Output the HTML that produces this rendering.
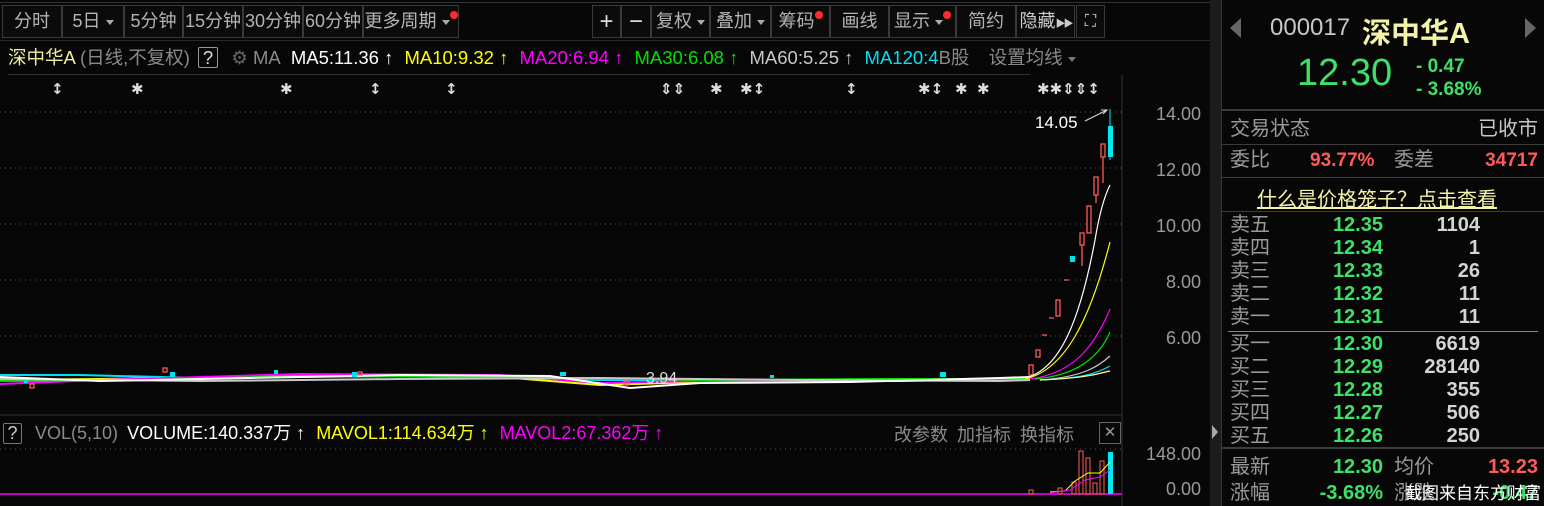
<!DOCTYPE html>
<html><head><meta charset="utf-8"><style>
*{margin:0;padding:0;box-sizing:border-box}
body{width:1544px;height:506px;background:#070707;overflow:hidden;position:relative;font-family:"Liberation Sans","Noto Sans CJK SC",sans-serif;color:#a8a8a8}
.a{position:absolute;white-space:nowrap}
.btn{position:absolute;top:5px;height:33px;border:1px solid #3a3a3a;background:#0b0b0b;color:#b4b4b4;font-size:18px;line-height:31px;text-align:center;white-space:nowrap}
.dot{display:inline-block;width:8px;height:8px;border-radius:4px;background:#ff2a2a;vertical-align:top;margin-top:5px}
.tri{display:inline-block;width:0;height:0;border-left:4px solid transparent;border-right:4px solid transparent;border-top:5px solid #aaa;vertical-align:middle;margin-left:5px}
.lb{position:absolute;left:1230px;font-size:20px;line-height:23px;color:#9a9a9a}
.pg{position:absolute;right:161px;font-size:20px;line-height:23px;color:#3ee068;font-weight:bold}
.vv{position:absolute;right:64px;font-size:20px;line-height:23px;color:#d4d4d4;font-weight:bold}
.hl{position:absolute;left:1222px;width:322px;height:1px;background:#3c3c3c}
</style></head><body>
<div class="a" style="left:0;top:2px;width:1210px;height:1px;background:#333"></div>
<div class="btn" style="left:2px;width:60px">分时</div>
<div class="btn" style="left:62px;width:62px">5日<span class="tri"></span></div>
<div class="btn" style="left:124px;width:59px">5分钟</div>
<div class="btn" style="left:183px;width:60px">15分钟</div>
<div class="btn" style="left:243px;width:60px">30分钟</div>
<div class="btn" style="left:303px;width:60px">60分钟</div>
<div class="btn" style="left:363px;width:96px">更多周期<span class="tri"></span><span class="dot"></span></div>
<div class="btn" style="left:592px;width:29px;font-size:24px;color:#ddd">+</div>
<div class="btn" style="left:621px;width:30px;font-size:24px;color:#ddd">−</div>
<div class="btn" style="left:651px;width:59px">复权<span class="tri"></span></div>
<div class="btn" style="left:710px;width:61px">叠加<span class="tri"></span></div>
<div class="btn" style="left:771px;width:59px">筹码<span class="dot"></span></div>
<div class="btn" style="left:830px;width:59px">画线</div>
<div class="btn" style="left:889px;width:67px">显示<span class="tri"></span><span class="dot"></span></div>
<div class="btn" style="left:956px;width:60px">简约</div>
<div class="btn" style="left:1016px;width:59px;color:#ccc">隐藏<span style="font-size:10px;letter-spacing:-2px">▶▶</span></div>
<div class="btn" style="left:1076px;width:29px;font-size:16px;color:#ccc">⛶</div>
<div class="a" style="left:0;top:40px;width:1210px;height:1px;background:#2a2a2a"></div>

<div class="a" style="left:8px;top:46px;font-size:18.5px;line-height:24px">
<span style="color:#f0f0a0">深中华A</span> <span style="color:#8a8a8a">(日线,不复权)</span>
<span style="display:inline-block;border:1px solid #999;border-radius:2px;width:20px;height:21px;text-align:center;line-height:19px;color:#ddd;margin-left:3px">?</span>
<span style="color:#666;margin-left:8px">⚙</span> <span style="color:#8a8a8a">MA</span>
<span style="color:#fff;margin-left:6px">MA5:11.36 ↑</span>
<span style="color:#ffff00;margin-left:6px">MA10:9.32 ↑</span>
<span style="color:#ff00ff;margin-left:6px">MA20:6.94 ↑</span>
<span style="color:#00e000;margin-left:6px">MA30:6.08 ↑</span>
<span style="color:#c8c8c8;margin-left:6px">MA60:5.25 ↑</span>
<span style="color:#00e0f0;margin-left:6px">MA120:4</span><span style="color:#888">B股</span>
<span style="color:#888;margin-left:14px">设置均线</span><span class="tri" style="border-top-color:#777"></span>
</div>
<div class="a" style="left:8px;top:74px;width:1022px;height:1px;background:#333"></div>

<svg class="a" style="left:0;top:75px" width="1210" height="431" viewBox="0 75 1210 431">
<g fill="#ddd" font-size="15" font-weight="bold" font-family="DejaVu Sans">
<text x="51" y="94">↕</text><text x="131" y="94">✱</text><text x="280" y="94">✱</text><text x="369" y="94">↕</text><text x="445" y="94">↕</text>
<text x="660" y="94">⇕⇕</text><text x="710" y="94">✱</text><text x="740" y="94">✱↕</text><text x="845" y="94">↕</text><text x="918" y="94">✱↕</text><text x="955" y="94">✱</text><text x="977" y="94">✱</text><text x="1037" y="94">✱✱⇕⇕↕</text>
</g>
<g stroke="#555" stroke-dasharray="1,4"><line x1="0" y1="112" x2="1122" y2="112"/><line x1="0" y1="168" x2="1122" y2="168"/><line x1="0" y1="224" x2="1122" y2="224"/><line x1="0" y1="280" x2="1122" y2="280"/><line x1="0" y1="336" x2="1122" y2="336"/><line x1="0" y1="449" x2="1122" y2="449"/></g>
<line x1="1122" y1="75" x2="1122" y2="506" stroke="#333"/>
<g fill="#9a9a9a" font-size="18" font-family="Liberation Sans" text-anchor="end"><text x="1201" y="120">14.00</text><text x="1201" y="176">12.00</text><text x="1201" y="232">10.00</text><text x="1201" y="288">8.00</text><text x="1201" y="344">6.00</text><text x="1201" y="460">148.00</text><text x="1201" y="495">0.00</text></g>
<g stroke-width="2" fill="none">
<polyline stroke="#00e0f0" points="0,375 80,375 200,378 400,376 600,380 800,380 1000,379 1030,378"/>
<polyline stroke="#ffff00" points="0,380 100,379 300,376 500,377 600,385 700,382 900,381 1030,379"/>
<polyline stroke="#ff00ff" points="0,384 100,380 300,374 500,375 600,383 700,381 900,380 1030,378"/>
<polyline stroke="#00e000" points="0,381 150,380 300,376 500,377 700,380 900,379 1030,379"/>
<polyline stroke="#c8c8c8" points="0,379 200,381 400,379 600,378 800,380 1000,381 1030,380"/>
<polyline stroke="#ffffff" points="0,377 100,381 250,378 400,375 550,376 630,388 700,383 850,382 1000,378 1030,377"/>
</g>
<g fill="#00e0f0"><rect x="24" y="380" width="4" height="3"/><rect x="170" y="372" width="5" height="5"/><rect x="274" y="370" width="4" height="4"/><rect x="352" y="372" width="5" height="5"/><rect x="560" y="372" width="6" height="4"/><rect x="770" y="375" width="4" height="3"/><rect x="940" y="372" width="6" height="5"/><rect x="1070" y="256" width="5" height="6"/></g>
<g fill="none" stroke="#ff5a5a" stroke-width="1.3"><rect x="30" y="384" width="4" height="4"/><rect x="163" y="368" width="4" height="4"/><rect x="358" y="372" width="4" height="3"/><rect x="624" y="381" width="5" height="4"/><rect x="1029" y="365" width="4" height="10"/><rect x="1036" y="350" width="4" height="7"/><rect x="1056" y="300" width="4" height="16"/><rect x="1080" y="233" width="4" height="12"/><line x1="1082" y1="245" x2="1082" y2="266"/><rect x="1087" y="206" width="4" height="27"/><rect x="1094" y="177" width="4" height="18"/><line x1="1096" y1="195" x2="1096" y2="203"/><rect x="1101" y="144" width="4" height="13"/><line x1="1103" y1="157" x2="1103" y2="183"/><line x1="1049" y1="318" x2="1054" y2="318"/><line x1="1042" y1="335" x2="1047" y2="335"/><line x1="1064" y1="280" x2="1069" y2="280"/></g>
<line x1="1110" y1="109" x2="1110" y2="160" stroke="#00e8f0"/><rect x="1108" y="126" width="5" height="31" fill="#00e8f0"/>
<g fill="none" stroke-width="1.2">
<path stroke="#fff" d="M1025,378 C1060,370 1080,320 1095,240 C1100,210 1105,195 1110,185"/>
<path stroke="#ffff00" d="M1025,379 C1065,370 1090,320 1110,242"/>
<path stroke="#ff00ff" d="M1030,379 C1075,373 1095,345 1110,309"/>
<path stroke="#00e000" d="M1035,379 C1080,375 1100,355 1110,332"/>
<path stroke="#c8c8c8" d="M1040,380 C1085,377 1100,365 1110,356"/>
<path stroke="#00e0f0" d="M1040,380 C1090,378 1100,371 1110,366"/>
<path stroke="#ffff90" d="M1040,380 C1090,378 1100,373 1110,371"/>
</g>
<text x="1035" y="128" fill="#fff" font-size="17" font-family="Liberation Sans">14.05</text>
<path d="M1085,121 L1107,110 M1101,110 L1107,110 L1103,114" stroke="#ddd" fill="none"/>
<text x="646" y="383" fill="#ddd" font-size="16" font-family="Liberation Sans">3.94</text>
<line x1="0" y1="415" x2="1122" y2="415" stroke="#333"/>
<line x1="0" y1="494" x2="1122" y2="494" stroke="#ff00ff" stroke-width="1.5"/>
<g fill="none" stroke="#ff5a5a"><rect x="1079" y="451" width="4" height="43"/><rect x="1086" y="458" width="4" height="36"/><rect x="1100" y="461" width="4" height="33"/><rect x="1093" y="483" width="4" height="11"/><rect x="1072" y="482" width="4" height="12"/><rect x="1029" y="490" width="4" height="4"/><rect x="1058" y="488" width="4" height="6"/></g>
<rect x="1108" y="452" width="5" height="42" fill="#00e8f0"/>
<polyline fill="none" stroke="#ffff00" points="1050,492 1065,491 1075,481 1088,473 1100,473 1110,462"/>
<polyline fill="none" stroke="#ff00ff" points="1050,493 1070,490 1085,480 1100,477 1110,470"/>
</svg>
<div class="a" style="left:0;top:421px;font-size:18px;line-height:24px">
<span style="display:inline-block;border:1px solid #777;border-radius:2px;width:19px;height:21px;text-align:center;line-height:19px;color:#ccc;margin-left:3px">?</span>
<span style="color:#8a8a8a;margin-left:8px">VOL(5,10)</span>
<span style="color:#fff;margin-left:4px">VOLUME:140.337万 ↑</span>
<span style="color:#ffff00;margin-left:6px">MAVOL1:114.634万 ↑</span>
<span style="color:#ff00ff;margin-left:6px">MAVOL2:67.362万 ↑</span></div>
<div class="a" style="left:894px;top:421px;font-size:18px;color:#8a8a8a;word-spacing:4px">改参数 加指标 换指标</div>
<div class="a" style="left:1099px;top:422px;width:22px;height:22px;border:1px solid #666;color:#999;text-align:center;line-height:20px;font-size:15px">✕</div>

<div class="a" style="left:1210px;top:0;width:11px;height:506px;background:#1c1c1c"></div>
<div class="a" style="left:1212px;top:425px;width:0;height:0;border-top:7px solid transparent;border-bottom:7px solid transparent;border-left:6px solid #aaa"></div>
<div class="a" style="left:1221px;top:0;width:1px;height:506px;background:#3a3a3a"></div>

<div class="a" style="left:1230px;top:18px;width:0;height:0;border-top:10px solid transparent;border-bottom:10px solid transparent;border-right:11px solid #666"></div>
<div class="a" style="left:1525px;top:18px;width:0;height:0;border-top:10px solid transparent;border-bottom:10px solid transparent;border-left:11px solid #666"></div>
<div class="a" style="left:1270px;top:14px;font-size:24px;color:#c8c8c8">000017</div>
<div class="a" style="left:1362px;top:10px;font-size:29px;color:#f4f4a8;font-weight:bold">深中华A</div>
<div class="a" style="left:1297px;top:52px;font-size:38px;color:#3ee068">12.30</div>
<div class="a" style="left:1416px;top:55px;font-size:19px;color:#3ee068;font-weight:bold;line-height:23px">- 0.47<br>- 3.68%</div>
<div class="hl" style="top:109px;height:2px"></div>
<div class="lb" style="top:118px">交易状态</div>
<div class="a" style="right:6px;top:118px;font-size:20px;line-height:23px;color:#c8c8c8">已收市</div>
<div class="hl" style="top:144px"></div>
<div class="lb" style="top:149px">委比</div>
<div class="a" style="left:1310px;top:149px;font-size:19px;line-height:23px;color:#ff5a5a;font-weight:bold">93.77%</div>
<div class="a" style="left:1394px;top:149px;font-size:20px;line-height:23px;color:#9a9a9a">委差</div>
<div class="a" style="right:6px;top:149px;font-size:19px;line-height:23px;color:#ff5a5a;font-weight:bold">34717</div>
<div class="hl" style="top:177px"></div>
<div class="a" style="left:1257px;top:183px;font-size:20px;color:#f4f4a8;text-decoration:underline">什么是价格笼子？点击查看</div>
<div class="hl" style="top:211px"></div>
<div class="lb" style="top:214px">卖五</div><div class="pg" style="top:214px">12.35</div><div class="vv" style="top:214px">1104</div>
<div class="lb" style="top:237px">卖四</div><div class="pg" style="top:237px">12.34</div><div class="vv" style="top:237px">1</div>
<div class="lb" style="top:260px">卖三</div><div class="pg" style="top:260px">12.33</div><div class="vv" style="top:260px">26</div>
<div class="lb" style="top:283px">卖二</div><div class="pg" style="top:283px">12.32</div><div class="vv" style="top:283px">11</div>
<div class="lb" style="top:306px">卖一</div><div class="pg" style="top:306px">12.31</div><div class="vv" style="top:306px">11</div>
<div class="a" style="left:1228px;top:331px;width:310px;height:1px;background:#888"></div>
<div class="lb" style="top:333px">买一</div><div class="pg" style="top:333px">12.30</div><div class="vv" style="top:333px">6619</div>
<div class="lb" style="top:356px">买二</div><div class="pg" style="top:356px">12.29</div><div class="vv" style="top:356px">28140</div>
<div class="lb" style="top:379px">买三</div><div class="pg" style="top:379px">12.28</div><div class="vv" style="top:379px">355</div>
<div class="lb" style="top:402px">买四</div><div class="pg" style="top:402px">12.27</div><div class="vv" style="top:402px">506</div>
<div class="lb" style="top:425px">买五</div><div class="pg" style="top:425px">12.26</div><div class="vv" style="top:425px">250</div>
<div class="hl" style="top:447px;height:2px"></div>
<div class="lb" style="top:456px">最新</div><div class="pg" style="top:456px">12.30</div>
<div class="a" style="left:1394px;top:456px;font-size:20px;line-height:23px;color:#9a9a9a">均价</div>
<div class="a" style="right:6px;top:456px;font-size:20px;line-height:23px;color:#ff5a5a;font-weight:bold">13.23</div>
<div class="lb" style="top:482px">涨幅</div><div class="pg" style="top:482px">-3.68%</div>
<div class="a" style="left:1394px;top:482px;font-size:20px;line-height:23px;color:#9a9a9a">涨跌</div>
<div class="a" style="right:6px;top:482px;font-size:20px;line-height:23px;color:#3ee068;font-weight:bold">-0.47</div>
<div class="a" style="left:1405px;top:479px;font-size:17px;color:#fff">截图来自东方财富</div>
</body></html>
